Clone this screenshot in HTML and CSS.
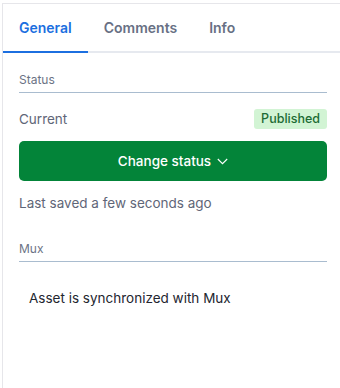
FILE: index.html
```html
<!DOCTYPE html>
<html>
<head>
<meta charset="utf-8">
<link rel="stylesheet" href="styles.css">
</head>
<body>
<div class="panel">
  <div class="tabs">
    <div class="tab active">General</div>
    <div class="tab">Comments</div>
    <div class="tab">Info</div>
  </div>
  <div class="content">
    <div class="section-label">Status</div>
    <div class="row">
      <span class="muted">Current</span>
      <span class="badge">Published</span>
    </div>
    <button class="btn">Change status
      <svg width="11" height="7" viewBox="0 0 11 7"><path d="M0.8 1 L5.5 5.7 L10.2 1" fill="none" stroke="#fff" stroke-width="1.1"/></svg>
    </button>
    <div class="muted saved">Last saved a few seconds ago</div>
    <div class="section-label mux">Mux</div>
    <div class="sync">Asset is synchronized with Mux</div>
  </div>
</div>
</body>
</html>
```
FILE: styles.css
```css
* { box-sizing: border-box; }
html, body { margin: 0; padding: 0; background: #fff; }
body { font-family: Inter, "Noto Sans", sans-serif; }
.panel {
  margin-left: 2px;
  margin-top: 3px;
  height: 385px;
  border-left: 1px solid #e6e6ea;
  border-top: 1px solid #e6e6ea;
}
.tabs {
  display: flex;
  height: 49px;
  border-bottom: 2px solid #e6e9ef;
}
.tab {
  padding: 0 16px;
  font-size: 14px;
  font-weight: 600;
  color: #687084;
  display: flex;
  align-items: center;
  margin-bottom: -2px;
  border-bottom: 2px solid transparent;
}
.tab.active {
  color: #1c6fe0;
  border-bottom-color: #1c6fe0;
}
.content {
  padding: 0 13px 0 16px;
}
.section-label {
  margin-top: 19px;
  font-size: 12px;
  color: #6b7385;
  padding-bottom: 5px;
  border-bottom: 1px solid #a9bccf;
}
.row {
  display: flex;
  justify-content: space-between;
  align-items: center;
  margin-top: 16px;
  height: 20px;
}
.muted { font-size: 13.5px; color: #5f6678; }
.badge {
  background: #d2f4d4;
  color: #1d6b33;
  font-size: 12.5px;
  font-weight: 500;
  padding: 2px 7px;
  border-radius: 3px;
  line-height: 16px;
}
.btn {
  display: flex;
  width: 100%;
  margin-top: 12px;
  height: 40px;
  align-items: center;
  justify-content: center;
  gap: 6px;
  background: #038439;
  color: #fff;
  border: 0;
  border-radius: 5px;
  font-family: inherit;
  font-size: 13.5px;
  font-weight: 500;
}
.saved { margin-top: 14px; }
.section-label.mux { margin-top: 30px; }
.sync {
  margin-top: 28px;
  padding-left: 10px;
  font-size: 13.5px;
  color: #23262f;
}
```
